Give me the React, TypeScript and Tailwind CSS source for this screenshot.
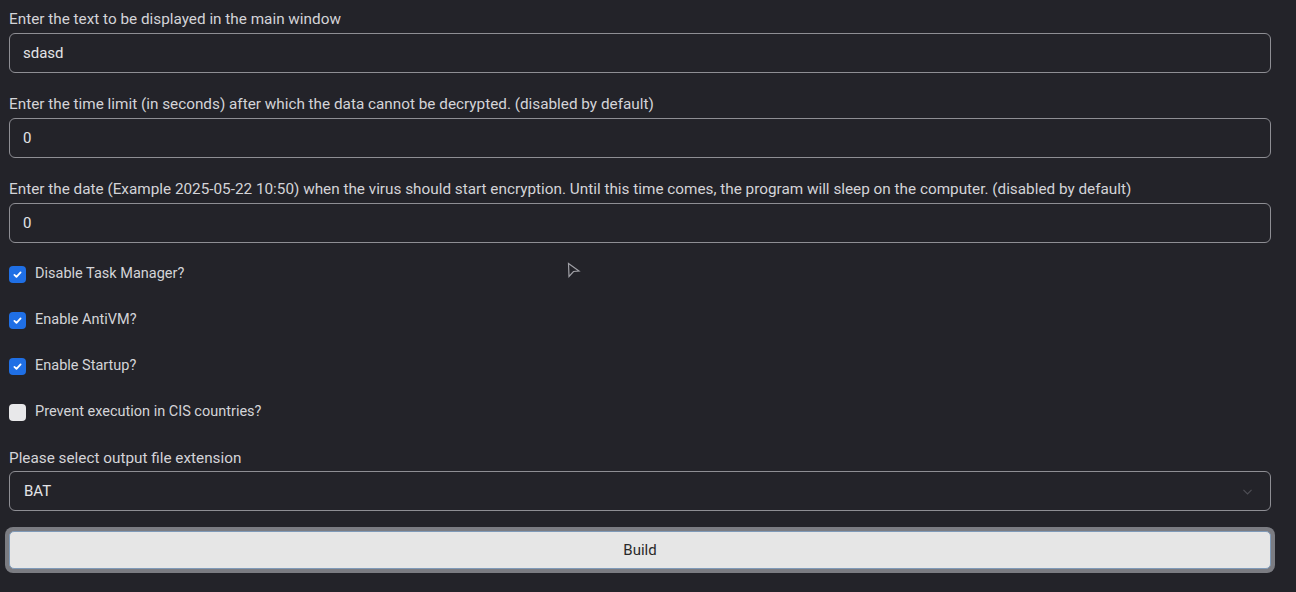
import { useState } from 'react';

const font = { fontFamily: 'Roboto, "Liberation Sans", sans-serif' };

function Check({ checked, label }: { checked: boolean; label: string }) {
  return (
    <label className="flex h-[46px] items-center gap-[9px]">
      {checked ? (
        <span className="flex h-[17px] w-[17px] items-center justify-center rounded-[4px] bg-[#1f6fe5]">
          <svg viewBox="0 0 16 16" className="h-[11px] w-[11px]" fill="none" stroke="white" strokeWidth="2.6" strokeLinecap="round" strokeLinejoin="round">
            <path d="M3.5 8.5l3 3 6-6.5" />
          </svg>
        </span>
      ) : (
        <span className="h-[17px] w-[17px] rounded-[4px] bg-[#e8e8ea]" />
      )}
      <span className="text-[14.5px] text-[#d4d4d8]">{label}</span>
    </label>
  );
}

function Field({ label, value, last }: { label: string; value: string; last?: boolean }) {
  return (
    <div className={last ? 'mb-[8px]' : 'mb-[21px]'}>
      <div className="mb-[4px] text-[15.3px] leading-[20px] text-[#d4d4d8]">{label}</div>
      <div className="flex h-[40px] items-center rounded-[6px] border border-[#8e8e94] px-[13px] text-[15px] text-[#e4e4e7]">
        {value}
      </div>
    </div>
  );
}

export default function App() {
  const [ext] = useState('BAT');
  return (
    <div className="min-h-[592px] bg-[#232329] px-[9px] pt-[9px]" style={font}>
      <div className="w-[1262px]">
        <Field label="Enter the text to be displayed in the main window" value="sdasd" />
        <Field label="Enter the time limit (in seconds) after which the data cannot be decrypted. (disabled by default)" value="0" />
        <Field
          label="Enter the date (Example 2025-05-22 10:50) when the virus should start encryption. Until this time comes, the program will sleep on the computer. (disabled by default)"
          value="0"
          last
        />
        <div>
          <Check checked label="Disable Task Manager?" />
          <Check checked label="Enable AntiVM?" />
          <Check checked label="Enable Startup?" />
          <Check checked={false} label="Prevent execution in CIS countries?" />
        </div>
        <div className="mt-[13px] mb-[3px] text-[15.3px] leading-[20px] text-[#d4d4d8]">Please select output file extension</div>
        <div className="flex h-[40px] items-center justify-between rounded-[6px] border border-[#8e8e94] pl-[14px] pr-[16px] text-[15px] text-[#e4e4e7]">
          <span>{ext}</span>
          <svg viewBox="0 0 16 16" className="h-[13px] w-[13px]" fill="none" stroke="#4e4e55" strokeWidth="1.4">
            <path d="M3 6l5 5 5-5" />
          </svg>
        </div>
        <div className="-mx-[4px] mt-[16px] rounded-[8px] bg-[#7b7c82] p-[4px]">
          <button className="flex h-[38px] w-full items-center justify-center rounded-[5px] border border-[#7f9ab8] bg-[#e6e6e6] text-[15px] text-[#2a2a2a]">
            Build
          </button>
        </div>
      </div>
      <svg className="absolute left-[567px] top-[262px]" width="14" height="16" viewBox="0 0 14 16" fill="none" stroke="#a0a0a6" strokeWidth="1.2">
        <path d="M1.5 1.5L12 9 6.5 9.5 2 14.5z" />
      </svg>
    </div>
  );
}
